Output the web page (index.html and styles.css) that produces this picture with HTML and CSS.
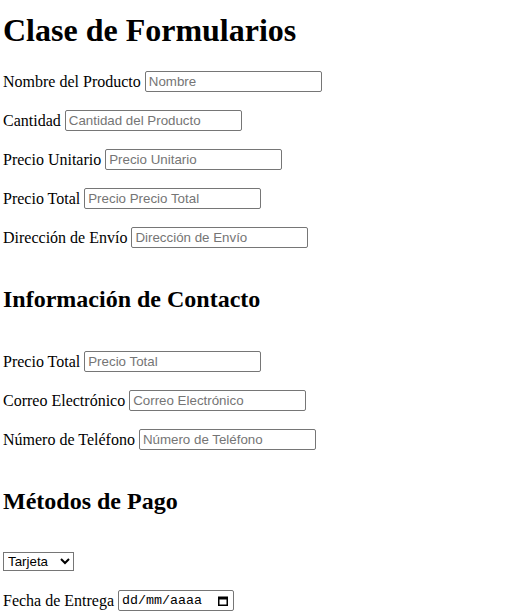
FILE: index.html
```html
<!DOCTYPE html>
<html lang="es">
<head>
<meta charset="utf-8">
<title>Clase de Formularios</title>
<link rel="stylesheet" href="styles.css">
</head>
<body class="page">
<h1 class="title">Clase de Formularios</h1>
<form class="form">
<p class="row"><label for="nombre">Nombre del Producto</label><input class="field" id="nombre" type="text" placeholder="Nombre"></p>
<p class="row"><label for="cantidad">Cantidad</label><input class="field" id="cantidad" type="text" placeholder="Cantidad del Producto"></p>
<p class="row"><label for="unitario">Precio Unitario</label><input class="field" id="unitario" type="text" placeholder="Precio Unitario"></p>
<p class="row"><label for="total">Precio Total</label><input class="field" id="total" type="text" placeholder="Precio Precio Total"></p>
<p class="row"><label for="direccion">Dirección de Envío</label><input class="field" id="direccion" type="text" placeholder="Dirección de Envío"></p>
<h2 class="section">Información de Contacto</h2>
<p class="row"><label for="total2">Precio Total</label><input class="field" id="total2" type="text" placeholder="Precio Total"></p>
<p class="row"><label for="correo">Correo Electrónico</label><input class="field" id="correo" type="email" placeholder="Correo Electrónico"></p>
<p class="row"><label for="telefono">Número de Teléfono</label><input class="field" id="telefono" type="tel" placeholder="Número de Teléfono"></p>
<h2 class="section section--pay">Métodos de Pago</h2>
<p class="row"><select class="select"><option>Tarjeta</option><option>Efectivo</option></select></p>
<p class="row"><label for="fecha">Fecha de Entrega</label><span class="date" id="fecha"><span class="date-text">dd/mm/aaaa</span><svg class="cal" width="10" height="10" viewBox="0 0 10 10"><rect x="0.75" y="1.25" width="8.5" height="8" fill="none" stroke="#000" stroke-width="1.5"/><rect x="0.75" y="1.25" width="8.5" height="2.25" fill="#000"/></svg></span></p>
</form>
</body>
</html>
```
FILE: styles.css
```css
.page {
  margin: 3px;
  font-family: "Liberation Serif", "Times New Roman", serif;
  color: #000;
  background: #fff;
}
.title {
  margin-top: 9px;
}
.section {
  margin: 37px 0 37px;
}
.section--pay {
  margin-bottom: 35px;
}
.row {
  display: flex;
  align-items: center;
  gap: 4px;
  height: 23px;
  margin: 16px 0;
}
.field {
  box-sizing: border-box;
  width: 177px;
  height: 21px;
  padding: 1px 3px;
  border: 1px solid #767676;
  border-radius: 2px;
  font-family: "Liberation Sans", Arial, sans-serif;
  font-size: 13.33px;
}
.field::placeholder {
  color: #757575;
}
.select {
  box-sizing: border-box;
  width: 71px;
  height: 19px;
  border: 1px solid #767676;
  border-radius: 0;
  font-family: "Liberation Sans", Arial, sans-serif;
  font-size: 13.33px;
  background: #fff;
  color: #000;
}
.date {
  box-sizing: border-box;
  display: inline-flex;
  align-items: center;
  justify-content: space-between;
  width: 116px;
  height: 21px;
  padding: 0 5px 0 3px;
  border: 1px solid #767676;
  border-radius: 2px;
}
.date-text {
  font-family: "Liberation Mono", "DejaVu Sans Mono", monospace;
  font-size: 13.33px;
  color: #000;
}
.cal {
  display: block;
}
```
